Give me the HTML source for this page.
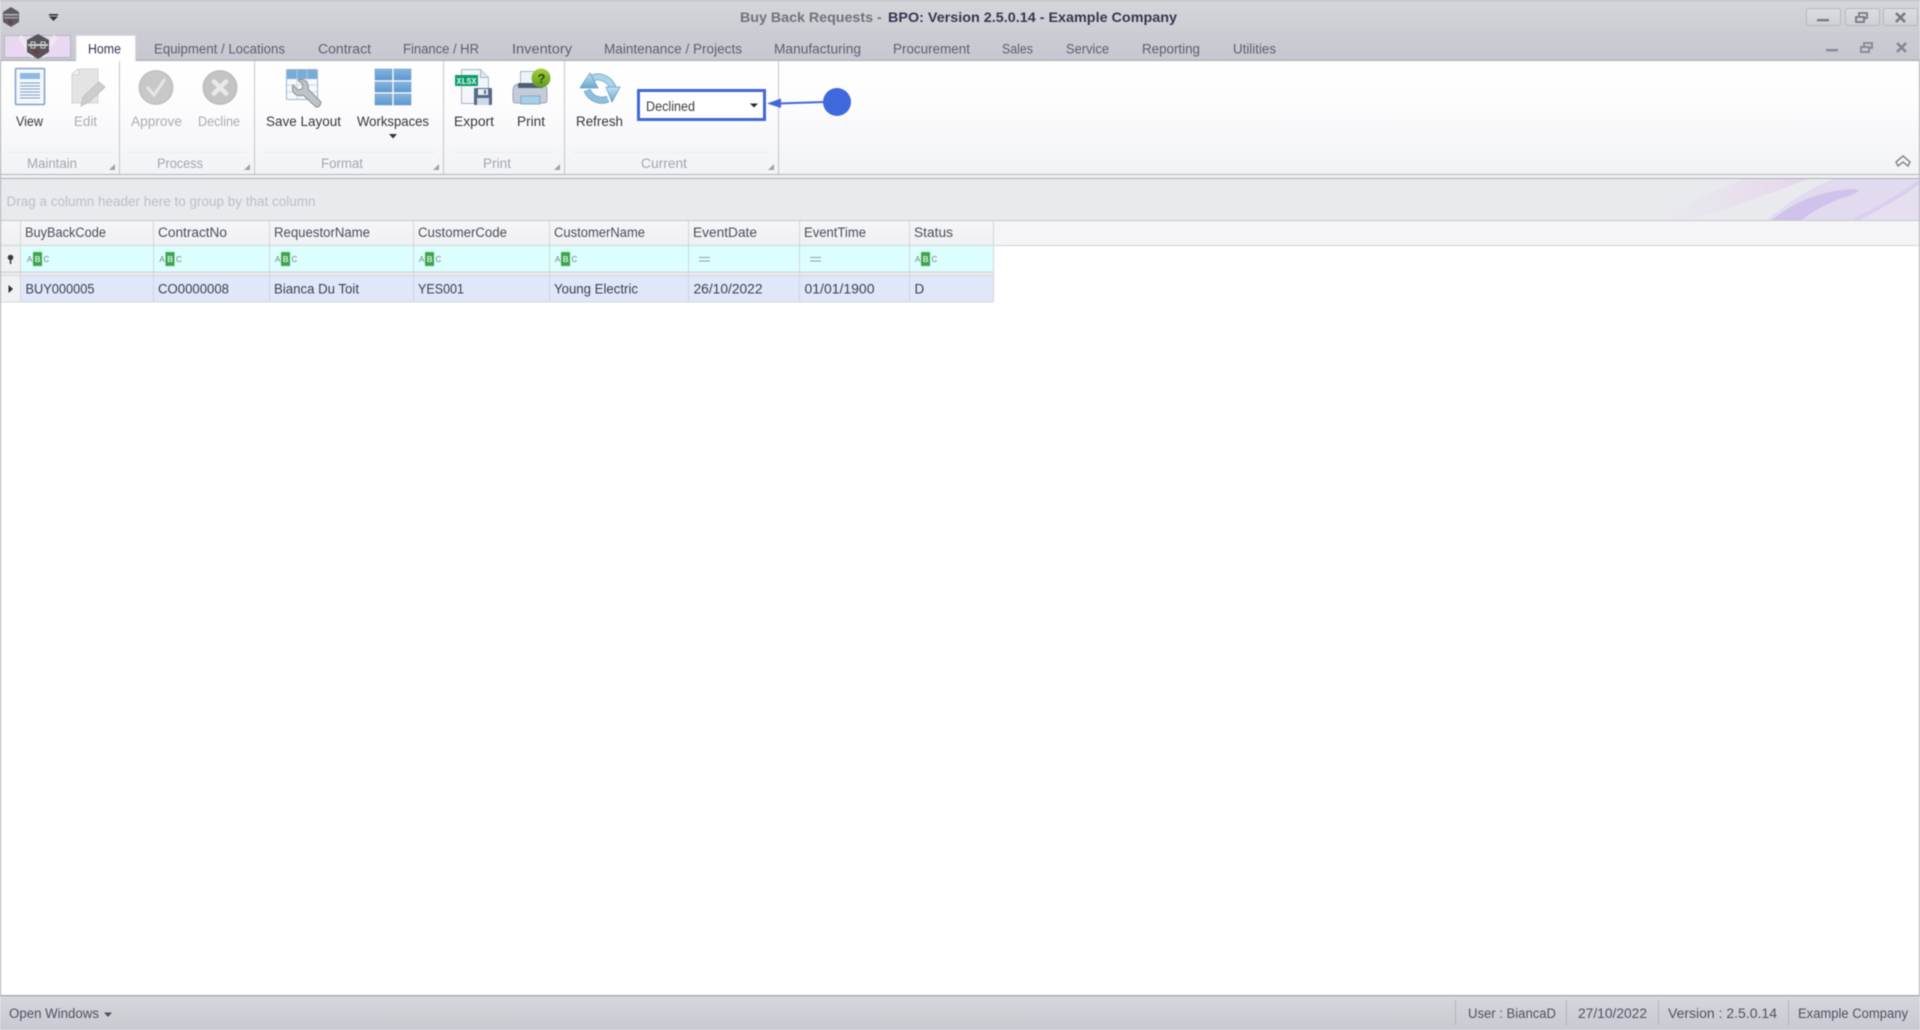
<!DOCTYPE html>
<html><head><meta charset="utf-8"><title>Buy Back Requests</title>
<style>
html,body{margin:0;padding:0;width:1920px;height:1030px;overflow:hidden;background:#fff}
svg{display:block;filter:blur(.45px)}
text{font-family:"Liberation Sans",sans-serif;font-size:13.5px;fill:#3c3f4a}
.tab{fill:#5b5f6e}.lab{fill:#34363f}.dis{fill:#a9abb2}.grp{fill:#a2a5ad}.cell{fill:#3d4150}.hd{fill:#4a4d5c}.st{fill:#4d5064}
.a{font-size:8px;fill:#6f7c72}.g{font-size:8px;font-weight:bold;fill:#d8f2dc}
</style></head><body>
<svg width="1920" height="1030" viewBox="0 0 1920 1030" xmlns="http://www.w3.org/2000/svg">
<defs>
<linearGradient id="tb" x1="0" y1="0" x2="0" y2="1"><stop offset="0" stop-color="#d5d6da"/><stop offset="1" stop-color="#c5c6cf"/></linearGradient>
<linearGradient id="rb" x1="0" y1="0" x2="0" y2="1"><stop offset="0" stop-color="#ffffff"/><stop offset=".35" stop-color="#fdfdfe"/><stop offset="1" stop-color="#f2f3f6"/></linearGradient>
<linearGradient id="sb" x1="0" y1="0" x2="0" y2="1"><stop offset="0" stop-color="#d6d7db"/><stop offset="1" stop-color="#c9cad2"/></linearGradient>
<linearGradient id="lg" x1="0" y1="0" x2="1" y2="1"><stop offset="0" stop-color="#e3d9ef"/><stop offset=".5" stop-color="#ecd8f2"/><stop offset="1" stop-color="#e2daf0"/></linearGradient>
<linearGradient id="hg" x1="0" y1="0" x2="0" y2="1"><stop offset="0" stop-color="#f6f6f8"/><stop offset="1" stop-color="#eff0f2"/></linearGradient>
<linearGradient id="wb" x1="0" y1="0" x2="0" y2="1"><stop offset="0" stop-color="#dcdde1"/><stop offset="1" stop-color="#cfd0d6"/></linearGradient>
<linearGradient id="blue" x1="0" y1="0" x2="0" y2="1"><stop offset="0" stop-color="#85b5df"/><stop offset="1" stop-color="#5d97cf"/></linearGradient>
<linearGradient id="refr" x1="0" y1="0" x2="0" y2="1"><stop offset="0" stop-color="#c0e2f2"/><stop offset="1" stop-color="#68a8d0"/></linearGradient>
<linearGradient id="pk" x1="0" y1="0" x2="1" y2="0"><stop offset="0" stop-color="#e8dcec" stop-opacity="0"/><stop offset="1" stop-color="#e6d5ec"/></linearGradient>
<linearGradient id="gc" x1="0" y1="0" x2="0" y2="1"><stop offset="0" stop-color="#a6cf3e"/><stop offset="1" stop-color="#5f9a1f"/></linearGradient>
</defs>

<!-- frame -->
<rect width="1920" height="1030" fill="#fff"/>
<rect width="1920" height="61" fill="url(#tb)"/>
<rect width="1920" height="1" fill="#aeafb5"/>

<!-- small logo + QAT arrow -->
<polygon points="11,7 19,12 19,22 11,27 3,22 3,12" fill="#5c5c62"/>
<rect x="4" y="14" width="14" height="1.500" fill="#b6b6b8"/><rect x="4" y="17" width="14" height="1.500" fill="#a0a0a4"/><circle cx="10" cy="22" r="2" fill="#7a3a38"/>
<rect x="49" y="14" width="9" height="1.600" fill="#33343c"/><polygon points="49,16.500 58,16.500 53.500,21" fill="#33343c"/>

<!-- title -->
<text x="740" y="22" textLength="133" lengthAdjust="spacingAndGlyphs" style="font-size:14px;font-weight:bold;fill:#70717c">Buy Back Requests</text>
<text x="877" y="22" style="font-size:14px;font-weight:bold;fill:#70717c">-</text>
<text x="888" y="22" textLength="289" lengthAdjust="spacingAndGlyphs" style="font-size:14px;font-weight:bold;fill:#33374f">BPO: Version 2.5.0.14 - Example Company</text>

<!-- window buttons -->
<g fill="url(#wb)" stroke="#b6b7bd"><rect x="1806.500" y="8.500" width="34" height="17" rx="2"/><rect x="1845.500" y="8.500" width="34" height="17" rx="2"/><rect x="1883.500" y="8.500" width="34" height="17" rx="2"/></g>
<rect x="1817" y="19" width="12" height="2.300" fill="#777884"/>
<g fill="none" stroke="#777884" stroke-width="1.800"><rect x="1856" y="17" width="8" height="5"/><path d="M1859 16v-3h8v5h-3"/></g>
<path d="M1896 13l9 9M1905 13l-9 9" stroke="#777884" stroke-width="2.600" fill="none"/>
<rect x="1826" y="49" width="12" height="2.300" fill="#858691"/>
<g fill="none" stroke="#858691" stroke-width="1.800"><rect x="1861" y="47" width="8" height="5"/><path d="M1864 46v-3h8v5h-3"/></g>
<path d="M1897 43l9 9M1906 43l-9 9" stroke="#858691" stroke-width="2.600" fill="none"/>

<!-- logo button -->
<rect x="4.500" y="35.500" width="66" height="22" fill="url(#lg)" stroke="#b5b5bf"/>
<path d="M20 36l14 21M56 36l-14 21" stroke="#f3ecf8" stroke-width="5" opacity=".7"/>
<polygon points="38,34 49,40 49,52 38,59 27,52 27,40" fill="#55555c"/>
<rect x="28" y="44" width="20" height="2" fill="#d0d0d2"/><rect x="31" y="42" width="4" height="6" fill="none" stroke="#d0d0d2"/><rect x="41" y="42" width="4" height="6" fill="none" stroke="#d0d0d2"/><circle cx="36" cy="52" r="2.500" fill="#7a3a38"/>

<!-- ribbon -->
<rect x="0" y="61" width="1920" height="113" fill="url(#rb)"/>
<rect x="0" y="60" width="1920" height="1" fill="#a9aab1"/>
<rect x="76.500" y="35.500" width="59" height="26" fill="#fff" stroke="none"/>
<path d="M76 61V35.500H135.500V61" fill="none" stroke="#dcdce2"/>
<rect x="77" y="59" width="58" height="3" fill="#fff"/>

<g class="tabs">
<text x="88" y="53.500" textLength="33" lengthAdjust="spacingAndGlyphs" style="fill:#2f3650">Home</text>
<text class="tab" x="154" y="53.500" textLength="131" lengthAdjust="spacingAndGlyphs">Equipment / Locations</text>
<text class="tab" x="318" y="53.500" textLength="53" lengthAdjust="spacingAndGlyphs">Contract</text>
<text class="tab" x="403" y="53.500" textLength="76" lengthAdjust="spacingAndGlyphs">Finance / HR</text>
<text class="tab" x="512" y="53.500" textLength="60" lengthAdjust="spacingAndGlyphs">Inventory</text>
<text class="tab" x="604" y="53.500" textLength="138" lengthAdjust="spacingAndGlyphs">Maintenance / Projects</text>
<text class="tab" x="774" y="53.500" textLength="87" lengthAdjust="spacingAndGlyphs">Manufacturing</text>
<text class="tab" x="893" y="53.500" textLength="77" lengthAdjust="spacingAndGlyphs">Procurement</text>
<text class="tab" x="1002" y="53.500" textLength="31" lengthAdjust="spacingAndGlyphs">Sales</text>
<text class="tab" x="1066" y="53.500" textLength="43" lengthAdjust="spacingAndGlyphs">Service</text>
<text class="tab" x="1142" y="53.500" textLength="58" lengthAdjust="spacingAndGlyphs">Reporting</text>
<text class="tab" x="1233" y="53.500" textLength="43" lengthAdjust="spacingAndGlyphs">Utilities</text>
</g>

<!-- ribbon separators & group bars -->
<g fill="#c4c5cb"><rect x="119" y="61" width="1" height="113"/><rect x="254" y="61" width="1" height="113"/><rect x="443" y="61" width="1" height="113"/><rect x="564" y="61" width="1" height="113"/><rect x="778" y="61" width="1" height="113"/></g>
<g fill="#ecedf0"><rect x="8" y="152" width="104" height="1"/><rect x="128" y="152" width="118" height="1"/><rect x="262" y="152" width="174" height="1"/><rect x="451" y="152" width="106" height="1"/><rect x="572" y="152" width="198" height="1"/></g>
<g fill="#9fa1a8"><polygon points="115,164 115,170 109,170"/><polygon points="250,164 250,170 244,170"/><polygon points="439,164 439,170 433,170"/><polygon points="560,164 560,170 554,170"/><polygon points="774,164 774,170 768,170"/></g>

<text class="lab" x="16" y="126" textLength="27" lengthAdjust="spacingAndGlyphs">View</text>
<text class="dis" x="74" y="126" textLength="23" lengthAdjust="spacingAndGlyphs">Edit</text>
<text class="dis" x="131" y="126" textLength="51" lengthAdjust="spacingAndGlyphs">Approve</text>
<text class="dis" x="198" y="126" textLength="42" lengthAdjust="spacingAndGlyphs">Decline</text>
<text class="lab" x="266" y="126" textLength="75" lengthAdjust="spacingAndGlyphs">Save Layout</text>
<text class="lab" x="357" y="126" textLength="72" lengthAdjust="spacingAndGlyphs">Workspaces</text>
<polygon points="389,134 397,134 393,138.500" fill="#33343c"/>
<text class="lab" x="454" y="126" textLength="40" lengthAdjust="spacingAndGlyphs">Export</text>
<text class="lab" x="517" y="126" textLength="28" lengthAdjust="spacingAndGlyphs">Print</text>
<text class="lab" x="576" y="126" textLength="47" lengthAdjust="spacingAndGlyphs">Refresh</text>

<text class="grp" x="27" y="168" textLength="50" lengthAdjust="spacingAndGlyphs">Maintain</text>
<text class="grp" x="157" y="168" textLength="46" lengthAdjust="spacingAndGlyphs">Process</text>
<text class="grp" x="321" y="168" textLength="42" lengthAdjust="spacingAndGlyphs">Format</text>
<text class="grp" x="483" y="168" textLength="28" lengthAdjust="spacingAndGlyphs">Print</text>
<text class="grp" x="641" y="168" textLength="46" lengthAdjust="spacingAndGlyphs">Current</text>

<!-- View icon -->
<rect x="15.500" y="68.500" width="29" height="36" rx="1" fill="#f4f7fc" stroke="#7f9fd0" stroke-width="1.500"/>
<rect x="20" y="73" width="20" height="6" fill="#8db9e2"/>
<path d="M20 83h20M20 86h20M20 89h20M20 92h20M20 95h20M20 98h20" stroke="#7e9cc4" stroke-width="1.100"/>
<!-- Edit icon -->
<path d="M72 74l6-5h20v34h-26z" fill="#e4e4e4" stroke="#d4d4d4"/><path d="M72 75h7v-6" fill="#f2f2f2" stroke="#d2d2d2"/>
<path d="M81 106l2-9 16-15 6 5-16 15z" fill="#cdcdcd" stroke="#c0c0c0"/>
<!-- Approve -->
<circle cx="156" cy="87.500" r="17.500" fill="#c8c8c8"/><circle cx="156" cy="87.500" r="16.500" fill="none" stroke="#bdbdbd"/>
<path d="M147 87l7 8 11-16" fill="none" stroke="#e6e6e6" stroke-width="3"/>
<!-- Decline -->
<circle cx="220" cy="87.500" r="17.500" fill="#c4c4c4"/><circle cx="220" cy="87.500" r="16.500" fill="none" stroke="#b9b9b9"/>
<path d="M214 81.500l12 12M226 81.500l-12 12" fill="none" stroke="#e9e9e9" stroke-width="4.500" stroke-linecap="round"/>
<!-- Save Layout -->
<rect x="286.500" y="69.500" width="31" height="30" rx="1" fill="#f6f8fb" stroke="#9db5d2"/>
<rect x="287" y="70" width="30" height="9" fill="#78abd8"/>
<path d="M297 79v20M307 79v20M287 85h30M287 92h30" stroke="#c9d7e6"/><path d="M297 70v9M307 70v9" stroke="#a6c9e7"/>
<path d="M321 102l-13-13a7.500 7.500 0 0 0-10-9l5 5-1 4-4 1-5-5a7.500 7.500 0 0 0 10 10l13 12q4 1 5-5z" fill="#bfc3c8" stroke="#8a9096"/>
<!-- Workspaces -->
<g fill="url(#blue)" stroke="#6f9fcc" stroke-width=".6"><rect x="375" y="69" width="17" height="11"/><rect x="394" y="69" width="17" height="11"/><rect x="375" y="82" width="17" height="10"/><rect x="394" y="82" width="17" height="10"/><rect x="375" y="94" width="17" height="11"/><rect x="394" y="94" width="17" height="11"/></g>
<!-- Export -->
<path d="M461.500 69.500h19l8 8v26h-27z" fill="#f2f5fa" stroke="#a8b4c6"/><path d="M480.500 69.500v8h8" fill="#dfe6f0" stroke="#a8b4c6"/>
<rect x="455" y="75" width="23" height="11" fill="#0c9c6a"/>
<text x="456.500" y="84" textLength="20" lengthAdjust="spacingAndGlyphs" style="font-size:9px;font-weight:bold;fill:#e2f7ee;font-family:'Liberation Mono',monospace">XLSX</text>
<rect x="474" y="88" width="18" height="17" rx="1" fill="#566a86"/><rect x="478" y="89" width="10" height="6" fill="#e8edf3"/><rect x="477" y="98" width="12" height="7" fill="#cfd8e3"/><rect x="484" y="90" width="2" height="4" fill="#566a86"/>
<!-- Print -->
<rect x="520.500" y="71.500" width="20" height="16" fill="#eef3f8" stroke="#a9b4c2"/>
<path d="M513 91q0-7 6-7h22q6 0 6 7v9q0 3-3 3h-28q-3 0-3-3z" fill="#c3ccd8" stroke="#9aa6b6"/>
<rect x="518" y="83" width="25" height="5" rx="1" fill="#4f5d75"/>
<rect x="521" y="96" width="19" height="8" fill="#a6cfea" stroke="#8fa4bb"/>
<circle cx="541" cy="78" r="9.500" fill="url(#gc)"/>
<text x="537.500" y="83" style="font-size:13px;font-weight:bold;fill:#2c4a10">?</text>
<!-- Refresh -->
<g fill="none" stroke-linecap="butt">
<path d="M592 78A16 16 0 0 1 613 88" stroke="#6c9fbf" stroke-width="7"/>
<path d="M587 90A16 16 0 0 0 608 99" stroke="#6c9fbf" stroke-width="7"/>
<path d="M592 78A16 16 0 0 1 613 88" stroke="#a9d4ea" stroke-width="5.500"/>
<path d="M587 90A16 16 0 0 0 608 99" stroke="#8cc0de" stroke-width="5.500"/>
</g>
<polygon points="580,88 598,88 590,73" fill="url(#refr)" stroke="#6c9fbf" stroke-width=".8"/>
<polygon points="606,87 620,87 612,102" fill="url(#refr)" stroke="#6c9fbf" stroke-width=".8"/>

<!-- combo -->
<rect x="638.500" y="90.500" width="126" height="29" fill="#fff" stroke="#4068d8" stroke-width="3"/>
<text x="646" y="111" textLength="49" lengthAdjust="spacingAndGlyphs" style="fill:#3a3b42">Declined</text>
<polygon points="750,103.500 758,103.500 754,107.500" fill="#27282e"/>
<!-- annotation -->
<path d="M825 102L778 103.500" stroke="#4068d8" stroke-width="2" fill="none"/>
<polygon points="767,103.500 781,98.500 781,108" fill="#4068d8"/>
<circle cx="837" cy="102" r="14" fill="#3f68dc"/>

<!-- collapse chevron -->
<path d="M1896 162l7-6 7 6-2 4-5-4-5 4z" fill="none" stroke="#87878f" stroke-width="1.500"/>

<!-- separator band -->
<rect y="174" width="1920" height="1.200" fill="#b3b4ba"/>
<rect y="175" width="1920" height="3" fill="#f0f0f3"/>
<rect y="178" width="1920" height="1" fill="#aeafb6"/>

<!-- group panel -->
<rect x="0" y="179" width="1920" height="41" fill="#e9eaee"/>
<path d="M1690 220Q1760 198 1808 179H1745Q1700 195 1660 220Z" fill="url(#pk)"/>
<path d="M1767 220Q1800 192 1833 179H1919V186Q1885 205 1855 220Z" fill="#e2daef"/>
<path d="M1772 220Q1805 192 1852 189Q1866 190 1848 196Q1818 206 1802 220Z" fill="#cdbeea" opacity=".85"/>
<path d="M1855 220Q1895 200 1919 182V220Z" fill="#e6dff0"/>
<path d="M1855 220Q1895 200 1919 182" fill="none" stroke="#dacfee" stroke-width="4"/>
<rect y="220" width="1920" height="1" fill="#c6c7cd"/>
<text x="6.500" y="206" textLength="309" lengthAdjust="spacingAndGlyphs" style="fill:#bcbec6">Drag a column header here to group by that column</text>

<!-- grid header -->
<rect x="1" y="221" width="992" height="25" fill="url(#hg)"/>
<rect x="993" y="221" width="926" height="25" fill="#f5f5f7"/>
<rect x="1" y="245" width="1918" height="1" fill="#d2d3d9"/>
<!-- filter row -->
<rect x="21" y="246" width="972" height="26" fill="#dcfffe"/>
<rect x="1" y="246" width="20" height="26" fill="#f0f1f3"/>
<rect x="1" y="272" width="992" height="4" fill="#eeeef1"/>
<rect x="1" y="271.500" width="992" height="1.200" fill="#cfd0d6"/>
<!-- data row -->
<rect x="21" y="276" width="972" height="26" fill="#dfe7f8"/>
<rect x="1" y="276" width="20" height="26" fill="#f0f1f3"/>
<rect x="1" y="275" width="992" height="1" fill="#d4d5db"/>
<rect x="1" y="301.500" width="992" height="1" fill="#d4d6dc"/>
<g fill="#d4d5db"><rect x="20" y="221" width="1" height="81"/><rect x="153" y="221" width="1" height="81"/><rect x="269" y="221" width="1" height="81"/><rect x="413" y="221" width="1" height="81"/><rect x="549" y="221" width="1" height="81"/><rect x="688" y="221" width="1" height="81"/><rect x="799" y="221" width="1" height="81"/><rect x="909" y="221" width="1" height="81"/><rect x="993" y="221" width="1" height="81"/></g>

<text class="hd" x="25" y="237" textLength="81" lengthAdjust="spacingAndGlyphs">BuyBackCode</text>
<text class="hd" x="158" y="237" textLength="69" lengthAdjust="spacingAndGlyphs">ContractNo</text>
<text class="hd" x="274" y="237" textLength="96" lengthAdjust="spacingAndGlyphs">RequestorName</text>
<text class="hd" x="418" y="237" textLength="89" lengthAdjust="spacingAndGlyphs">CustomerCode</text>
<text class="hd" x="554" y="237" textLength="91" lengthAdjust="spacingAndGlyphs">CustomerName</text>
<text class="hd" x="693" y="237" textLength="64" lengthAdjust="spacingAndGlyphs">EventDate</text>
<text class="hd" x="804" y="237" textLength="62" lengthAdjust="spacingAndGlyphs">EventTime</text>
<text class="hd" x="914" y="237" textLength="39" lengthAdjust="spacingAndGlyphs">Status</text>

<!-- filter pin -->
<circle cx="10.500" cy="257.500" r="2.800" fill="#3a3b42"/><rect x="9.800" y="259" width="1.500" height="5" fill="#3a3b42"/>
<!-- ABC glyphs -->
<g id="abc">
<text class="a" x="27" y="262">A</text><rect x="33" y="252" width="9" height="14" fill="#3ea54d"/><text class="g" x="34.800" y="262">B</text><text class="a" x="43.500" y="262">C</text>
<text class="a" x="159.500" y="262">A</text><rect x="165.500" y="252" width="9" height="14" fill="#3ea54d"/><text class="g" x="167.300" y="262">B</text><text class="a" x="176" y="262">C</text>
<text class="a" x="275" y="262">A</text><rect x="281" y="252" width="9" height="14" fill="#3ea54d"/><text class="g" x="282.800" y="262">B</text><text class="a" x="291.500" y="262">C</text>
<text class="a" x="419" y="262">A</text><rect x="425" y="252" width="9" height="14" fill="#3ea54d"/><text class="g" x="426.800" y="262">B</text><text class="a" x="435.500" y="262">C</text>
<text class="a" x="555" y="262">A</text><rect x="561" y="252" width="9" height="14" fill="#3ea54d"/><text class="g" x="562.800" y="262">B</text><text class="a" x="571.500" y="262">C</text>
<text class="a" x="915" y="262">A</text><rect x="921" y="252" width="9" height="14" fill="#3ea54d"/><text class="g" x="922.800" y="262">B</text><text class="a" x="931.500" y="262">C</text>
</g>
<path d="M699 257.500h11M699 261h11M810 257.500h11M810 261h11" stroke="#9a9ea8" stroke-width="1.100"/>

<!-- data -->
<polygon points="8.500,285 8.500,293 13,289" fill="#2c2d33"/>
<text class="cell" x="25.500" y="293.500" textLength="69" lengthAdjust="spacingAndGlyphs">BUY000005</text>
<text class="cell" x="158" y="293.500" textLength="71" lengthAdjust="spacingAndGlyphs">CO0000008</text>
<text class="cell" x="274" y="293.500" textLength="85" lengthAdjust="spacingAndGlyphs">Bianca Du Toit</text>
<text class="cell" x="418" y="293.500" textLength="46" lengthAdjust="spacingAndGlyphs">YES001</text>
<text class="cell" x="554" y="293.500" textLength="84" lengthAdjust="spacingAndGlyphs">Young Electric</text>
<text class="cell" x="693.500" y="293.500" textLength="69" lengthAdjust="spacingAndGlyphs">26/10/2022</text>
<text class="cell" x="804.500" y="293.500" textLength="70" lengthAdjust="spacingAndGlyphs">01/01/1900</text>
<text class="cell" x="914.500" y="293.500">D</text>

<!-- window side borders -->
<rect x="0" y="61" width="1" height="935" fill="#a9aab1"/>
<rect x="1919" y="61" width="1" height="935" fill="#a9aab1"/>

<!-- status bar -->
<rect y="996" width="1920" height="34" fill="url(#sb)"/>
<rect y="995" width="1920" height="1.200" fill="#a3a4ab"/>
<text class="st" x="9" y="1018" textLength="90" lengthAdjust="spacingAndGlyphs">Open Windows</text>
<polygon points="104,1012.500 112,1012.500 108,1017" fill="#4d5064"/>
<g fill="#b3b4bb"><rect x="1455" y="1000" width="1" height="25"/><rect x="1566" y="1000" width="1" height="25"/><rect x="1658" y="1000" width="1" height="25"/><rect x="1788" y="1000" width="1" height="25"/></g>
<text class="st" x="1468" y="1018" textLength="88" lengthAdjust="spacingAndGlyphs">User : BiancaD</text>
<text class="st" x="1578" y="1018" textLength="69" lengthAdjust="spacingAndGlyphs">27/10/2022</text>
<text class="st" x="1668" y="1018" textLength="109" lengthAdjust="spacingAndGlyphs">Version : 2.5.0.14</text>
<text class="st" x="1798" y="1018" textLength="110" lengthAdjust="spacingAndGlyphs">Example Company</text>
</svg>
</body></html>
